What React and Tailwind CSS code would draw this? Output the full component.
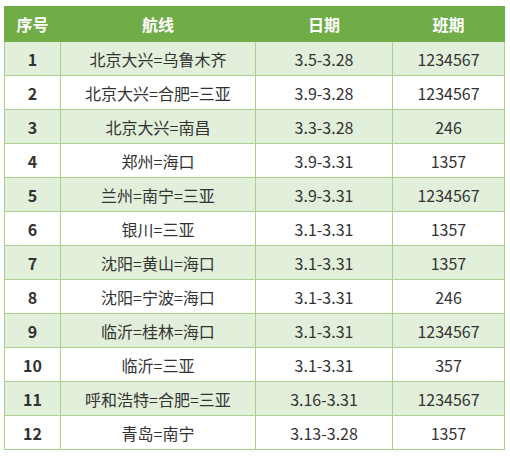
const rows = [
  ['1', '北京大兴=乌鲁木齐', '3.5-3.28', '1234567'],
  ['2', '北京大兴=合肥=三亚', '3.9-3.28', '1234567'],
  ['3', '北京大兴=南昌', '3.3-3.28', '246'],
  ['4', '郑州=海口', '3.9-3.31', '1357'],
  ['5', '兰州=南宁=三亚', '3.9-3.31', '1234567'],
  ['6', '银川=三亚', '3.1-3.31', '1357'],
  ['7', '沈阳=黄山=海口', '3.1-3.31', '1357'],
  ['8', '沈阳=宁波=海口', '3.1-3.31', '246'],
  ['9', '临沂=桂林=海口', '3.1-3.31', '1234567'],
  ['10', '临沂=三亚', '3.1-3.31', '357'],
  ['11', '呼和浩特=合肥=三亚', '3.16-3.31', '1234567'],
  ['12', '青岛=南宁', '3.13-3.28', '1357'],
];

export default function App() {
  return (
    <div className="w-[510px] h-[458px] bg-white pt-[6px] pl-[4px]" style={{ fontFamily: '"Noto Sans CJK SC", "Noto Sans", sans-serif' }}>
      <table className="w-[500px] border-collapse table-fixed text-[16px] text-[#333]">
        <colgroup>
          <col className="w-[56px]" />
          <col className="w-[195px]" />
          <col className="w-[137px]" />
          <col className="w-[112px]" />
        </colgroup>
        <thead>
          <tr className="h-[35px] bg-[#70ad47] text-white font-bold">
            <th className="border border-[#70ad47]">序号</th>
            <th className="border border-[#70ad47]">航线</th>
            <th className="border border-[#70ad47]">日期</th>
            <th className="border border-[#70ad47]">班期</th>
          </tr>
        </thead>
        <tbody>
          {rows.map((r, i) => (
            <tr key={r[0]} className={`h-[34px] ${i % 2 === 0 ? 'bg-[#e2efda]' : 'bg-white'}`}>
              <td className="border border-[#a9d08e] text-center font-bold">{r[0]}</td>
              <td className="border border-[#a9d08e] text-center">{r[1]}</td>
              <td className="border border-[#a9d08e] text-center">{r[2]}</td>
              <td className="border border-[#a9d08e] text-center">{r[3]}</td>
            </tr>
          ))}
        </tbody>
      </table>
    </div>
  );
}
